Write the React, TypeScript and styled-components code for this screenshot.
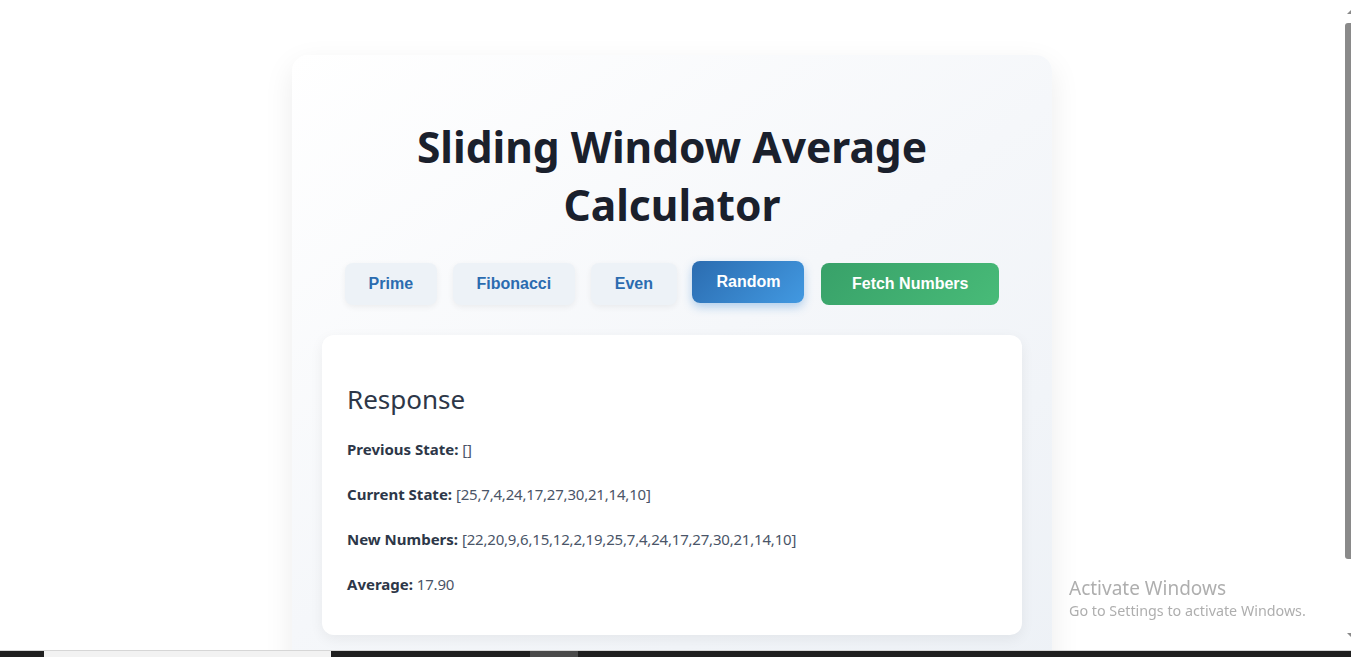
import React from "react";
import styled, { createGlobalStyle } from "styled-components";

const Global = createGlobalStyle`
  html, body {
    margin: 0;
    padding: 0;
    overflow: hidden;
    height: 100%;
    background: #ffffff;
  }
  body {
    font-family: "Segoe UI", "Noto Sans", "Open Sans", sans-serif;
  }
`;

const Page = styled.div`
  box-sizing: border-box;
  width: calc(100% - 7px);
  padding-top: 55px;
  display: flex;
  justify-content: center;
`;

const Card = styled.div`
  box-sizing: border-box;
  width: 760px;
  padding: 32px 30px 40px;
  border-radius: 16px;
  background: linear-gradient(145deg, #ffffff 0%, #f5f7fa 50%, #edf1f6 100%);
  box-shadow: 0 10px 30px rgba(0, 0, 0, 0.08);
  text-align: center;
`;

const Title = styled.h1`
  margin: 31px 0 29px;
  font-size: 42.5px;
  line-height: 58px;
  font-weight: 700;
  color: #1a202c;
`;

const ButtonRow = styled.div`
  display: flex;
  justify-content: center;
  align-items: flex-start;
  gap: 15.5px;
  margin-bottom: 30px;
`;

const TypeButton = styled.button<{ $active?: boolean }>`
  font-family: "Liberation Sans", Arial, sans-serif;
  font-size: 16px;
  font-weight: 700;
  line-height: 18px;
  padding: 12px 24px;
  border: none;
  border-radius: 8px;
  cursor: pointer;
  color: ${(p) => (p.$active ? "#ffffff" : "#2b6cb0")};
  background: ${(p) =>
    p.$active ? "linear-gradient(135deg, #2b6cb0 0%, #4299e1 100%)" : "#edf2f7"};
  box-shadow: ${(p) =>
    p.$active ? "0 4px 10px rgba(49, 130, 206, 0.35)" : "0 2px 6px rgba(0, 0, 0, 0.06)"};
  transform: ${(p) => (p.$active ? "translateY(-2px)" : "none")};
`;

const FetchButton = styled.button`
  font-family: "Liberation Sans", Arial, sans-serif;
  font-size: 16px;
  font-weight: 700;
  line-height: 18px;
  padding: 12px 31px;
  margin-left: 1px;
  border: none;
  border-radius: 8px;
  cursor: pointer;
  color: #ffffff;
  background: linear-gradient(135deg, #38a169 0%, #48bb78 100%);
`;

const ResponseCard = styled.div`
  box-sizing: border-box;
  background: #ffffff;
  border-radius: 12px;
  padding: 24px 25px 28px;
  text-align: left;
  box-shadow: 0 4px 14px rgba(0, 0, 0, 0.06);
`;

const ResponseTitle = styled.h2`
  margin: 23px 0 11px;
  font-size: 26px;
  line-height: 34px;
  font-weight: 400;
  color: #2d3748;
`;

const Line = styled.p`
  margin: 0;
  padding: 11px 0;
  font-size: 15px;
  line-height: 23px;
  color: #4a5568;
`;

const Label = styled.strong`
  font-weight: 700;
  color: #2d3748;
`;

const Value = styled.span`
  letter-spacing: -0.2px;
`;

const Watermark = styled.div`
  position: fixed;
  left: 1069px;
  top: 576px;
  font-family: "Segoe UI", "Noto Sans", "Open Sans", sans-serif;
  color: rgba(140, 140, 140, 0.7);
  pointer-events: none;
`;

const WatermarkTitle = styled.div`
  font-size: 19px;
  line-height: 25px;
`;

const WatermarkText = styled.div`
  font-size: 14.3px;
  line-height: 20px;
`;

const ScrollTrack = styled.div`
  position: fixed;
  top: 0;
  right: 0;
  width: 6px;
  height: 650px;
  background: #ffffff;
`;

const ScrollThumb = styled.div`
  position: absolute;
  top: 23px;
  left: 0;
  width: 6px;
  height: 536px;
  border-radius: 3px 0 0 3px;
  background: #8a8a8a;
`;

const ScrollArrow = styled.div<{ $down?: boolean }>`
  position: absolute;
  right: 0;
  ${(p) => (p.$down ? "top: 633px;" : "top: 10px;")}
  width: 0;
  height: 0;
  border-left: 4px solid transparent;
  ${(p) => (p.$down ? "border-top: 4px solid #8a8a8a;" : "border-bottom: 4px solid #8a8a8a;")}
`;

const Taskbar = styled.div`
  position: fixed;
  left: 0;
  right: 0;
  bottom: 0;
  height: 6px;
  border-top: 1px solid #d6d6d6;
  background: #1f1f1f;
  display: flex;
`;

const TaskItem = styled.div<{ $w: number; $ml: number; $c: string }>`
  margin-left: ${(p) => p.$ml}px;
  width: ${(p) => p.$w}px;
  background: ${(p) => p.$c};
`;

const types = ["Prime", "Fibonacci", "Even", "Random"];

const rows: [string, string][] = [
  ["Previous State:", "[]"],
  ["Current State:", "[25,7,4,24,17,27,30,21,14,10]"],
  ["New Numbers:", "[22,20,9,6,15,12,2,19,25,7,4,24,17,27,30,21,14,10]"],
  ["Average:", "17.90"],
];

export default function App() {
  const active = "Random";
  return (
    <>
      <Global />
      <Page>
        <Card>
          <Title>
            Sliding Window Average
            <br />
            Calculator
          </Title>
          <ButtonRow>
            {types.map((t) => (
              <TypeButton key={t} $active={t === active}>
                {t}
              </TypeButton>
            ))}
            <FetchButton>Fetch Numbers</FetchButton>
          </ButtonRow>
          <ResponseCard>
            <ResponseTitle>Response</ResponseTitle>
            {rows.map(([label, value]) => (
              <Line key={label}>
                <Label>{label}</Label> <Value>{value}</Value>
              </Line>
            ))}
          </ResponseCard>
        </Card>
      </Page>
      <Watermark>
        <WatermarkTitle>Activate Windows</WatermarkTitle>
        <WatermarkText>Go to Settings to activate Windows.</WatermarkText>
      </Watermark>
      <ScrollTrack>
        <ScrollArrow />
        <ScrollThumb />
        <ScrollArrow $down />
      </ScrollTrack>
      <Taskbar>
        <TaskItem $ml={44} $w={287} $c="#f2f2f2" />
        <TaskItem $ml={199} $w={48} $c="#4a4a4a" />
      </Taskbar>
    </>
  );
}
